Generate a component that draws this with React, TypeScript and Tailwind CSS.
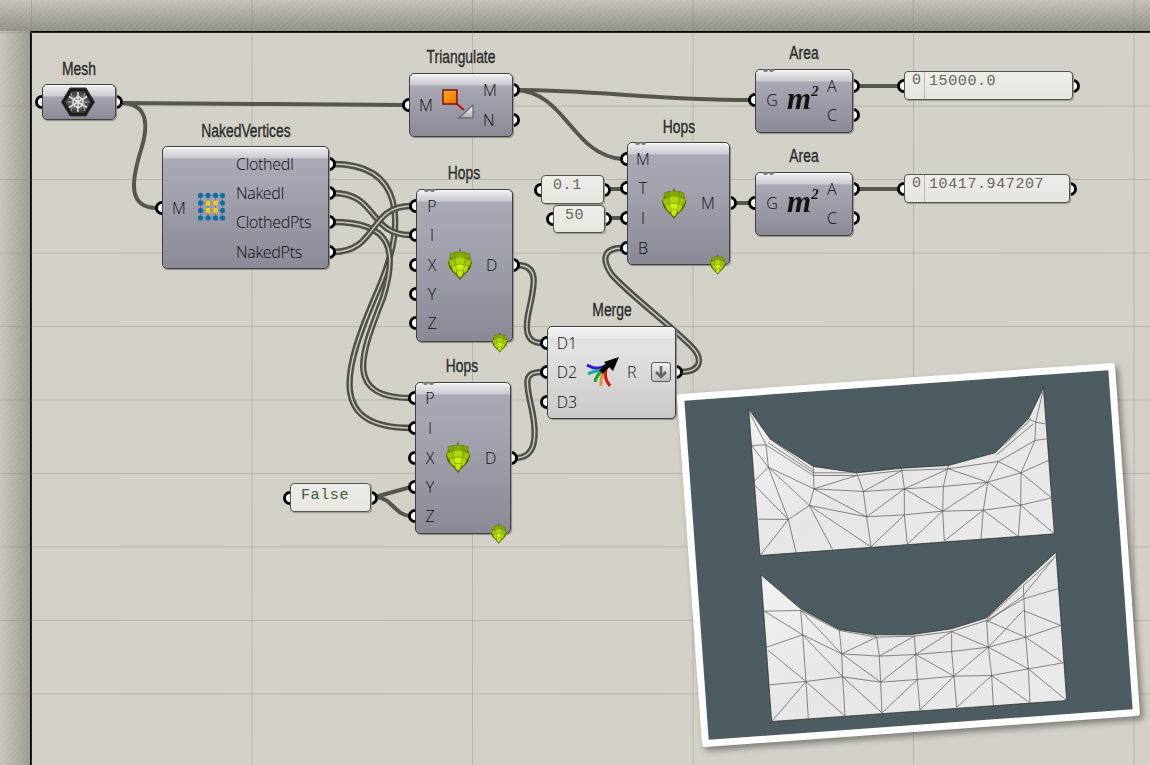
import React from "react";

type Port = { n: string; y: number };
type NodeProps = {
  x: number; y: number; w: number; h: number; label?: string; labelY?: number; labelX?: number;
  inputs?: Port[]; outputs?: Port[]; inX?: number; outX?: number; light?: boolean; dots?: boolean; children?: React.ReactNode;
};

const PortDot = ({ x, y }: { x: number; y: number }) => (
  <div className="absolute w-[14px] h-[14px] rounded-full border-[3px] border-black bg-white" style={{ left: x - 7, top: y - 7 }} />
);

function GhNode({ x, y, w, h, label, labelY, labelX, inputs = [], outputs = [], inX = 16, outX = 0, light, dots, children }: NodeProps) {
  return (
    <>
      {label && (
        <div
          className="absolute text-[18px] leading-none text-[#2b2b2b] whitespace-nowrap -translate-x-1/2 -translate-y-1/2 scale-x-[0.77] [-webkit-text-stroke:0.35px_#2b2b2b] font-['Liberation_Sans',sans-serif]"
          style={{ left: labelX ?? x + w / 2, top: labelY ?? y - 16 }}
        >
          {label}
        </div>
      )}
      {inputs.map((p) => <PortDot key={"i" + p.n} x={x} y={p.y} />)}
      {outputs.map((p) => <PortDot key={"o" + p.n} x={x + w} y={p.y} />)}
      <div
        className={
          "absolute rounded-[5px] border border-[#3f3f42] shadow-[inset_0_1px_0_#ffffff,1px_1px_1px_#8f8d85] " +
          (light
            ? "bg-[linear-gradient(#f3f3f3_0,#e9e9e9_11px,#dedede_12px,#e3e3e3_20px,#c9c9c9_100%)]"
            : "bg-[linear-gradient(#f1f1f2_0,#c9c9cf_11px,#a9a9b6_12px,#a5a5b1_30%,#8a8a96_100%)]")
        }
        style={{ left: x, top: y, width: w, height: h }}
      >
        {dots && (
          <div className="absolute left-[7px] top-[-1px] flex gap-[1px]">
            <div className="w-[5px] h-[3px] rounded-b-full bg-[#77777a]" />
            <div className="w-[5px] h-[3px] rounded-b-full bg-[#77777a]" />
          </div>
        )}
      </div>
      {inputs.map((p) => (
        <div
          key={"il" + p.n}
          className="absolute text-[16px] leading-none font-[350] text-[#0c0c10] font-['Open_Sans',sans-serif] -translate-x-1/2 -translate-y-1/2"
          style={{ left: x + inX, top: p.y }}
        >
          {p.n}
        </div>
      ))}
      {outputs.map((p) => (
        <div
          key={"ol" + p.n}
          className="absolute text-[16px] leading-none font-[350] tracking-[-0.3px] text-[#0c0c10] font-['Open_Sans',sans-serif] -translate-y-1/2"
          style={{ left: x + outX, top: p.y }}
        >
          {p.n}
        </div>
      ))}
      {children}
    </>
  );
}

function PanelBox({ x, y, w, h = 29, text, idx, green, cx, textTop = 1 }: { x: number; y: number; w: number; h?: number; text: string; idx?: boolean; green?: boolean; cx?: number; textTop?: number }) {
  return (
    <>
      <PortDot x={x} y={y + h / 2} />
      <PortDot x={x + w} y={y + h / 2} />
      <div
        className="absolute rounded-[4px] border border-[#55554f] bg-[linear-gradient(#edece8,#e6e5e0)] overflow-hidden shadow-[1px_1px_1px_#9b9990]"
        style={{ left: x, top: y, width: w, height: h }}
      >
        {idx && (
          <>
            <div className="absolute left-[19px] top-0 bottom-0 w-px bg-[#b9b8b2]" />
            <div className="absolute left-[7px] top-[0px] text-[15px] leading-[18px] text-[#666] font-['Liberation_Mono',monospace]">0</div>
          </>
        )}
        <div
          className={"absolute text-[15px] leading-[18px] tracking-[0.6px] font-['Liberation_Mono',monospace] " + (green ? "text-[#34603a]" : "text-[#66665f]")}
          style={{ left: cx ?? (idx ? 24 : 10), top: textTop }}
        >
          {text}
        </div>
      </div>
    </>
  );
}

const leaf = (cx: number, cy: number, r: number) =>
  `M${cx - r} ${cy - r * 0.7}Q${cx} ${cy - r * 1.2} ${cx + r} ${cy - r * 0.7}Q${cx + r} ${cy + r * 0.5} ${cx} ${cy + r * 1.2}Q${cx - r} ${cy + r * 0.5} ${cx - r} ${cy - r * 0.7}Z`;

function Hop({ x, y, s = 1 }: { x: number; y: number; s?: number }) {
  return (
    <svg className="absolute overflow-visible" style={{ left: x, top: y }} width={24 * s} height={32 * s} viewBox="0 0 24 32">
      <path d="M12 0L13 4L18 4.5L22 9L24 15L22.5 20L19.5 24L16 27L12 32L8 27L4.5 24L1.5 20L0 15L2 9L6 4.5L11 4Z" fill="#4a6614" />
      <g stroke="#5f8208" strokeWidth="0.5">
        <path d={leaf(6.5, 9, 4.6)} fill="#7ea406" />
        <path d={leaf(17.5, 9, 4.6)} fill="#7ea406" />
        <path d={leaf(12, 8.5, 5)} fill="#84aa08" />
        <path d={leaf(4.8, 15, 4.2)} fill="#9cc404" />
        <path d={leaf(19.2, 15, 4.2)} fill="#9cc404" />
        <path d={leaf(12, 14, 5.4)} fill="#b0d406" />
        <path d={leaf(7.5, 20.5, 4)} fill="#b4da06" />
        <path d={leaf(16.5, 20.5, 4)} fill="#b4da06" />
        <path d={leaf(12, 20, 4.2)} fill="#d4ee14" />
        <path d={leaf(12, 25.5, 3.6)} fill="#c8e60e" />
      </g>
    </svg>
  );
}

const DARK = "#56564f";
const single = [
  "M120 103C230 103 300 105 404 105",
  "M120 103C150 103 148 128 141 150C131 182 128 208 157 208",
  "M516 90C600 90 650 100 750 100",
  "M516 90C566 92 572 155 622 159",
  "M375 497L411 487",
  "M375 497C392 497 395 516 411 516",
  "M607 189H622",
  "M608 218H622",
  "M734 203H750",
  "M857 86H899",
  "M857 189H899",
];
const double = [
  "M333 164C402 164 408 220 378 290C342 372 328 428 411 428",
  "M333 222C392 222 398 250 383 298C362 352 342 398 411 398",
  "M333 193C378 193 368 235 411 235",
  "M333 252C378 252 368 206 411 206",
  "M517 265C542 265 533 290 528 315C524 336 530 343 542 343",
  "M515 458C537 458 537 435 532 410C525 380 524 372 542 372",
  "M680 372C702 372 704 358 690 345C670 325 630 295 612 275C600 258 605 248 622 248",
];

const upperEdges: number[][] = [
  [270,600,355,492],[378,590,355,492],[355,492,265,491],[355,492,250,385],[355,492,295,335],[355,492,418,450],
  [418,450,488,582],[418,450,603,574],[418,450,590,484],[590,484,603,574],[590,484,703,478],[703,478,818,467],[818,467,940,464],[940,464,1052,449],[1052,449,1145,427],
  [703,478,712,566],[703,478,603,574],[818,467,712,566],[818,467,823,556],[940,464,823,556],[940,464,933,550],[940,464,1045,543],[1052,449,1045,543],[1052,449,1153,535],
  [590,484,580,408],[590,484,703,400],[703,400,703,478],[703,400,818,467],[820,393,818,467],[953,380,818,467],[953,380,940,464],[953,380,1052,449],[1053,352,1052,449],[1053,352,1145,427],
  [432,400,418,450],[432,400,590,484],[432,400,295,335],[295,335,418,450],[432,400,580,408],[580,408,703,400],[703,400,820,393],[820,393,953,380],[953,380,1053,352],[1053,352,1135,315],
  [432,400,430,333],[432,400,560,360],[580,408,560,352],[580,408,695,345],[703,400,695,338],[703,400,835,340],[820,393,835,330],[953,380,835,340],[953,380,985,318],[1053,352,985,318],[1053,352,1095,255],[1130,250,1095,255],[1095,255,1097,200],[1097,200,1125,205],
  [295,335,288,268],[288,268,430,360],[295,335,245,270],[295,335,250,380],[288,268,245,270],[288,268,236,165],[300,250,430,345],[295,262,430,352],[430,360,560,360],[430,352,560,352],[560,360,695,345],[695,345,835,340],[835,340,985,318],[985,318,1095,255],[975,292,1080,195],[980,298,1090,205],[1075,190,1097,200],[1075,190,1120,100],[1097,200,1118,110],
];
const lowerEdges: number[][] = [
  [415,1090,408,978],[525,1082,518,964],[636,1072,632,980],[750,1064,742,972],[860,1056,852,962],[970,1050,965,960],[1080,1042,1075,940],
  [408,978,398,838],[518,964,515,895],[632,980,628,902],[742,972,737,897],[852,962,845,888],[965,960,955,875],[1075,940,1067,845],
  [398,838,392,765],[515,895,508,825],[628,902,620,845],[737,897,733,842],[845,888,845,828],[955,875,950,795],[1067,845,1060,690],
  [298,988,408,978],[408,978,518,964],[518,964,632,980],[632,980,742,972],[742,972,852,962],[852,962,965,960],[965,960,1075,940],[1075,940,1180,922],
  [290,875,398,838],[398,838,515,895],[515,895,628,902],[628,902,737,897],[737,897,845,888],[845,888,955,875],[955,875,1067,845],[1067,845,1172,810],
  [283,767,392,765],[392,765,508,825],[508,825,620,845],[620,845,733,842],[733,842,845,828],[845,828,950,795],[950,795,1060,730],[1060,730,1163,700],
  [305,1098,408,978],[408,978,525,1082],[518,964,636,1072],[742,972,636,1072],[750,1064,852,962],[965,960,860,1056],[965,960,1080,1042],[1075,940,1190,1035],
  [283,767,398,838],[295,885,408,978],[398,838,518,964],[515,895,632,980],[737,897,632,980],[737,897,852,962],[955,875,852,962],[955,875,1075,940],[1067,845,1180,922],
  [392,765,515,895],[620,845,515,895],[733,842,628,902],[845,828,737,897],[845,828,955,875],[950,795,1067,845],[1060,765,955,875],[1060,765,1172,810],
  [950,790,1055,695],[950,800,1060,720],[1060,720,1158,600],[1060,690,1150,610],[508,820,620,840],
];

function Lines({ e }: { e: number[][] }) {
  return (
    <g stroke="#4f4f4f" strokeWidth="2" fill="none">
      {e.map((l, i) => <line key={i} x1={l[0]} y1={l[1]} x2={l[2]} y2={l[3]} />)}
    </g>
  );
}

export default function App() {
  return (
    <div className="relative w-[1150px] h-[765px] overflow-hidden flex flex-col bg-[#d3d0c8]">
      {/* hatched ruler bands */}
      <div className="h-[31px] flex-none bg-[repeating-linear-gradient(135deg,rgba(255,255,255,0.06)_0,rgba(255,255,255,0.06)_2px,transparent_2px,transparent_4px),linear-gradient(#c2c0b7,#8f8e86)]" />
      <div className="flex flex-1 min-h-0">
        <div className="w-[30px] flex-none bg-[repeating-linear-gradient(135deg,rgba(255,255,255,0.06)_0,rgba(255,255,255,0.06)_2px,transparent_2px,transparent_4px),linear-gradient(90deg,#c6c4bb,#9b9a91)]" />
        <div className="flex-1 border-l-2 border-t-2 border-black bg-[#d3d0c8]" />
      </div>

      {/* grid */}
      <div className="absolute inset-0 bg-[linear-gradient(rgba(120,118,106,0.3)_1px,transparent_1px),linear-gradient(90deg,rgba(120,118,106,0.3)_1px,transparent_1px)] bg-[size:220.5px_73.5px] bg-[position:31px_32px]" />

      {/* wires */}
      <svg className="absolute inset-0" width="1150" height="765" viewBox="0 0 1150 765" fill="none">
        {single.map((d) => <path key={d} d={d} stroke={DARK} strokeWidth="4" />)}
        {double.map((d) => (
          <g key={d}>
            <path d={d} stroke="#50504a" strokeWidth="6.4" />
            <path d={d} stroke="#c9c6bd" strokeWidth="1.5" />
          </g>
        ))}
      </svg>

      {/* Mesh */}
      <GhNode x={42} y={84} w={74} h={36} label="Mesh" labelY={69} inputs={[{ n: "", y: 102 }]} outputs={[{ n: " ", y: 102 }]}>
        <svg className="absolute" style={{ left: 61, top: 87 }} width="34" height="30" viewBox="0 0 34 30">
          <defs>
            <radialGradient id="hexg"><stop offset="0" stopColor="#8a8a8a" /><stop offset="1" stopColor="#3a3a3a" /></radialGradient>
          </defs>
          <polygon points="9,1 25,1 33.5,15 25,29 9,29 0.5,15" fill="#1c1c1c" stroke="#3c3c3c" />
          <polygon points="10.5,4 23.5,4 30,15 23.5,26 10.5,26 4,15" fill="url(#hexg)" />
          <g stroke="#e2e2e2" strokeWidth="1.5" fill="none" className="blur-[0.3px]">
            <path d="M17 5V25M8 9.5L26 20.5M26 9.5L8 20.5" />
            <polygon points="17,9.5 22,12.5 22,18 17,21 12,18 12,12.5" />
            <path d="M10 6L12 12.5M24 6L22 12.5M6 15H12M28 15H22M10 24L12 18M24 24L22 18" strokeWidth="1" stroke="#aaa" />
          </g>
        </svg>
      </GhNode>

      {/* NakedVertices */}
      <GhNode x={162} y={146} w={167} h={123} label="NakedVertices" labelY={131} inX={17} outX={74}
        inputs={[{ n: "M", y: 208 }]}
        outputs={[{ n: "ClothedI", y: 164 }, { n: "NakedI", y: 193 }, { n: "ClothedPts", y: 222 }, { n: "NakedPts", y: 252 }]}>
        <svg className="absolute" style={{ left: 197, top: 192 }} width="30" height="30" viewBox="0 0 30 30">
          <path d="M3.5 3.5H25.5M3.5 11H25.5M3.5 18.5H25.5M3.5 26H25.5M3.5 3.5V26M11 3.5V26M18.5 3.5V26M25.5 3.5V26" stroke="#4f86a8" strokeWidth="1" />
          {[3.5, 11, 18.5, 26].map((cy, r) =>
            [3.5, 11, 18.5, 25.5].map((cx, c) => (
              <rect key={r + "-" + c} x={cx - 2.4} y={cy - 2.4} width="4.8" height="4.8" rx="1.5"
                fill={r > 0 && r < 3 && c > 0 && c < 3 ? "#f8c514" : "#0f6da6"} />
            ))
          )}
        </svg>
      </GhNode>

      {/* Triangulate */}
      <GhNode x={409} y={73} w={104} h={64} label="Triangulate" labelY={57} inX={17} outX={74}
        inputs={[{ n: "M", y: 105 }]} outputs={[{ n: "M", y: 90 }, { n: "N", y: 120 }]}>
        <svg className="absolute" style={{ left: 442, top: 89 }} width="34" height="31" viewBox="0 0 34 31">
          <defs>
            <linearGradient id="tri" x1="0" y1="0" x2="0" y2="1"><stop offset="0" stopColor="#ffffff" /><stop offset="1" stopColor="#a8a8a8" /></linearGradient>
            <linearGradient id="org" x1="0" y1="0" x2="1" y2="1"><stop offset="0" stopColor="#ffb020" /><stop offset="1" stopColor="#f06a00" /></linearGradient>
          </defs>
          <path d="M15 15L22 21" stroke="#b3101a" strokeWidth="2" />
          <rect x="1" y="1" width="14" height="14" fill="url(#org)" stroke="#7d1010" strokeWidth="1.5" />
          <polygon points="17,29 31,16 31,29" fill="url(#tri)" stroke="#6e6e6e" strokeWidth="1.3" />
        </svg>
      </GhNode>

      {/* Area 1 & 2 */}
      {[69, 172].map((y) => (
        <GhNode key={y} x={755} y={y} w={98} h={64} label="Area" labelY={y - 16} inX={17} outX={72} dots
          inputs={[{ n: "G", y: y + 31 }]} outputs={[{ n: "A", y: y + 17 }, { n: "C", y: y + 46 }]}>
          <div className="absolute text-[31px] leading-none font-bold italic text-[#141414] font-['Liberation_Serif',serif] whitespace-nowrap blur-[0.6px]" style={{ left: 787, top: y + 14 }}>
            m<sup className="text-[15px] top-[-13px] relative align-baseline">2</sup>
          </div>
        </GhNode>
      ))}
      <PanelBox x={904} y={71} w={169} text="15000.0" idx />
      <PanelBox x={904} y={174} w={166} text="10417.947207" idx />

      {/* Hops upper */}
      <GhNode x={416} y={189} w={97} h={153} label="Hops" labelX={464} labelY={173} inX={16} outX={70} dots
        inputs={[{ n: "P", y: 206 }, { n: "I", y: 235 }, { n: "X", y: 265 }, { n: "Y", y: 294 }, { n: "Z", y: 323 }]}
        outputs={[{ n: "D", y: 265 }]}>
        <Hop x={448} y={248} />
        <Hop x={492} y={332} s={0.65} />
      </GhNode>

      {/* Hops right */}
      <GhNode x={627} y={142} w={103} h={123} label="Hops" labelY={127} inX={16} outX={74} dots
        inputs={[{ n: "M", y: 159 }, { n: "T", y: 188 }, { n: "I", y: 218 }, { n: "B", y: 248 }]}
        outputs={[{ n: "M", y: 203 }]}>
        <Hop x={662} y={187} />
        <Hop x={710} y={254} s={0.65} />
      </GhNode>

      <PanelBox x={541} y={175} w={63} text="0.1" cx={11} />
      <PanelBox x={553} y={205} w={52} h={28} text="50" cx={11} />

      {/* Hops lower */}
      <GhNode x={415} y={382} w={96} h={152} label="Hops" labelX={462} labelY={366} inX={15} outX={70} dots
        inputs={[{ n: "P", y: 398 }, { n: "I", y: 428 }, { n: "X", y: 458 }, { n: "Y", y: 487 }, { n: "Z", y: 516 }]}
        outputs={[{ n: "D", y: 458 }]}>
        <Hop x={446} y={441} />
        <Hop x={491} y={523} s={0.65} />
      </GhNode>

      <PanelBox x={290} y={483} w={81} text="False" green textTop={3} />

      {/* Merge */}
      <GhNode x={547} y={326} w={129} h={93} label="Merge" labelY={310} light inX={20} outX={80}
        inputs={[{ n: "D1", y: 343 }, { n: "D2", y: 372 }, { n: "D3", y: 402 }]} outputs={[{ n: "R", y: 372 }]}>
        <svg className="absolute blur-[0.4px]" style={{ left: 585, top: 356 }} width="36" height="33" viewBox="0 0 36 33" fill="none">
          <path d="M2 9C10 14 16 13 22 9" stroke="#2a18e0" strokeWidth="3" />
          <path d="M3 18C9 14 16 16 22 10" stroke="#16a7a0" strokeWidth="3" />
          <path d="M10 26C10 20 16 16 22 10" stroke="#1f9f2a" strokeWidth="3" />
          <path d="M16 30C15 22 18 16 22 10" stroke="#d99a2c" strokeWidth="3" />
          <path d="M25 30C20 24 19 17 22 10" stroke="#e01414" strokeWidth="3" />
          <path d="M16 16L24 8" stroke="#000" strokeWidth="5" />
          <polygon points="34,1 28,15 19,6" fill="#000" />
        </svg>
        <div className="absolute w-[20px] h-[20px] rounded-[3px] border border-[#5c5c5c] bg-[linear-gradient(#efefef,#bdbdbd)] flex items-center justify-center" style={{ left: 651, top: 362 }}>
          <svg width="14" height="14" viewBox="0 0 14 14" fill="none">
            <path d="M7 1V12M2 7L7 12L12 7" stroke="#636363" strokeWidth="2.6" />
          </svg>
        </div>
      </GhNode>

      {/* Inset render */}
      <div className="absolute left-[689px] top-[377.5px] w-[439px] h-[354px] p-[7px] bg-white rounded-[3px] rotate-[-4.1deg] shadow-[3px_4px_6px_rgba(0,0,0,0.4)]">
        <svg className="block w-full h-full bg-[#4d5c60]" viewBox="696 384.5 425 340">
          <defs>
            <linearGradient id="sheet" x1="0" y1="0" x2="1" y2="1">
              <stop offset="0" stopColor="#f4f4f4" />
              <stop offset="0.5" stopColor="#e6e6e6" />
              <stop offset="1" stopColor="#eaeaea" />
            </linearGradient>
          </defs>
          <g transform="rotate(4.1 908.5 554.5)">
            <g transform="translate(670 355) scale(0.33333)">
              <polygon points="236,160 300,250 430,333 560,352 695,338 835,330 975,292 1075,190 1120,95 1153,535 270,600" fill="url(#sheet)" stroke="#222" strokeWidth="2" />
              <Lines e={upperEdges} />
              <polygon points="273,658 392,760 508,822 620,838 720,838 845,820 950,787 1055,685 1158,590 1190,1035 305,1098" fill="url(#sheet)" stroke="#222" strokeWidth="2" />
              <Lines e={lowerEdges} />
            </g>
          </g>
        </svg>
      </div>
    </div>
  );
}
